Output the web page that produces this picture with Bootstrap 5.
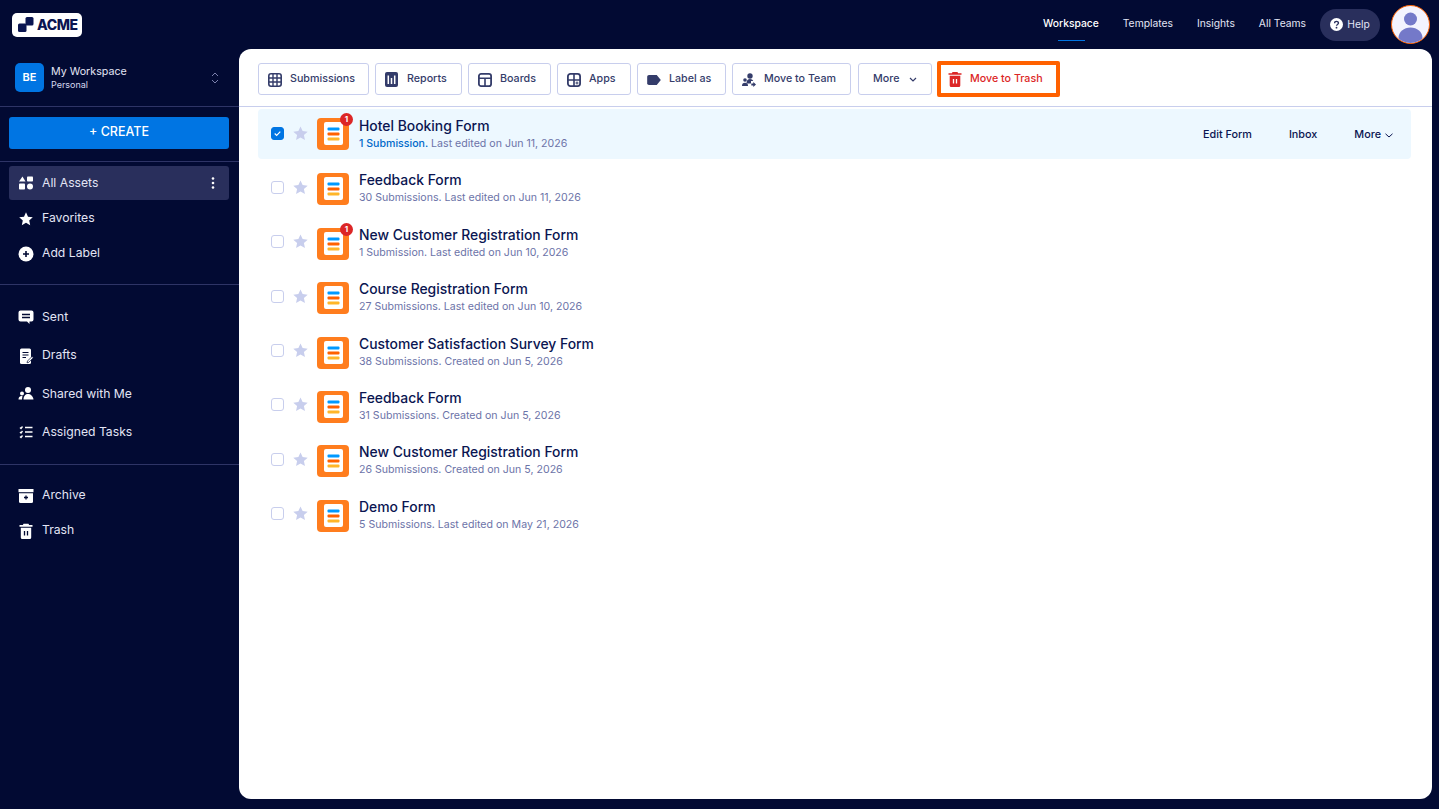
<!DOCTYPE html>
<html lang="en">
<head>
<meta charset="utf-8">
<title>Workspace</title>
<link href="https://cdn.jsdelivr.net/npm/bootstrap@5.3.0/dist/css/bootstrap.min.css" rel="stylesheet">
<style>
html,body{height:100%}
body{background:#020a33;font-family:"Inter","Liberation Sans",sans-serif;overflow:hidden;color:#0a1551}
.shell{height:809px}
.topbar{height:49px;padding:0 9px 0 12px}
.logo-box{width:70px;height:24px;background:#fff;border-radius:5px;gap:2px;padding-left:6px}
.logo-txt{font:800 14px/1 "Inter",sans-serif;color:#0a1551;letter-spacing:-.4px}
.topnav-link{position:relative;font-size:10.3px;color:#e3e5f5;text-decoration:none;margin-right:24px;margin-top:-1px}
.topnav-link.on{color:#fff;font-weight:500}
.topnav-link.on::after{content:"";position:absolute;left:15px;width:27px;bottom:-9px;height:1px;background:#0075e3}
.help-pill{width:60px;height:32px;border-radius:16px;background:#292f5c;font-size:10.3px;color:#e3e5f5;gap:4px;margin-left:14px}
.avatar-ring{width:39px;height:39px;border-radius:50%;border:1px solid #ff6100;background:#f3f3fe;margin-left:11px;overflow:hidden}
.bodyrow{height:750px}
.sidebar{width:239px;flex:none}
.ws-block{height:58px;padding:0 19px 0 15px;border-bottom:1px solid #2e3466}
.ws-badge{width:29px;height:29px;border-radius:5px;background:#0075e3;color:#fff;font-size:11px;font-weight:600;margin-right:7px}
.ws-name{font-size:10.7px;line-height:14px;padding-top:1px;color:#e3e5f5}
.ws-sub{font-size:9px;line-height:12px;color:#d5d8ee}
.create-wrap{padding:10px 10px 12px 9px;border-bottom:1px solid #2e3466}
.create-btn{height:32px;background:#0075e3;border:0;border-radius:3px;color:#fff;font-size:12.5px;font-weight:500;line-height:28px;padding:0 0 2px}
.side-group{padding:4px 10px 0 9px;border-bottom:1px solid #2e3466}
.side-item{height:35px;padding:2px 14px 0 9px;color:#e3e5f5;font-size:12.2px;text-decoration:none;border-radius:3px;gap:8px}
.side-item.on{background:#292f5c;height:34px;padding-top:0}
.side-item svg.gl{width:16px;height:16px;flex:none}
.g1{height:123px}
.g2{height:180px;padding-top:12px}
.g2 .side-item{height:38.4px}
.g3{padding-top:12px;border-bottom:0}
.panel{width:1193px;height:750px;background:#fff;border-radius:12px;flex:none}
.tools{height:58px;padding:14px 19px 0;gap:6px;border-bottom:1px solid #c8ceed}
.tool-btn{height:32px;border:1px solid #c8ceed;border-radius:3px;background:#fff;color:#343c6a;font-size:10.7px;font-weight:500;gap:8px;padding:1px 0 0 9px;flex:none}
.tool-btn svg.ti{flex:none;width:14px}
.w1{width:111px}.w2{width:87px}.w3{width:83px}.w4{width:74px}.w5{width:89px}.w6{width:119px}.w7{width:74px;margin-left:1px;padding-left:14px}
.chev-gap{margin-right:2px}
.trash-btn{width:123px;height:36px;margin:-2px 0 0 -1px;border:4px solid #ff6100;border-radius:2px;color:#dc2626;background:#fff;font-size:10.7px;font-weight:500;gap:8px;padding:1px 0 0 7px;flex:none}
.rows{padding:2px 21px 0 19px}
.form-row{height:54.4px;border-radius:4px;padding:0 18px 0 13px}
.form-row.sel{height:50px;background:#edf8ff;margin-bottom:3.2px}
.form-row .txt{margin-top:-2px}
.form-row.sel .txt{margin-top:0}
.cb-box{width:13px;height:13px;border:1px solid #c8ceed;border-radius:3px;background:#fff;flex:none;margin:0 8px 4px 0}
.cb-box.chk{background:#0075e3;border-color:#0075e3;margin-bottom:2px}
.star{width:17px;height:17px;flex:none;margin:0 8px 4px 0}
.sel .star{margin-bottom:2px}
.form-ic{position:relative;width:32px;height:32px;flex:none;background:#ff7d1e;border-radius:4px;margin-right:10px}
.red-dot{position:absolute;top:-5px;right:-4px;width:13px;height:13px;border-radius:50%;background:#dc2626;color:#fff;font-size:8px;font-weight:700;line-height:13px;text-align:center}
.f-title{font-size:13.9px;line-height:18px;font-weight:500;color:#0a1551}
.f-sub{font-size:10.6px;line-height:15px;padding-top:1px;color:#6c73a8}
.f-sub b{font-weight:500;color:#0068c9}
.act{font-size:10.8px;font-weight:500;color:#0a1551;text-decoration:none}
.acts{margin-top:3px}
.gap-a{margin-right:37px}
</style>
</head>
<body>
<svg width="0" height="0" class="position-absolute">
<defs>
<symbol id="formic" viewBox="0 0 32 32"><rect x="7" y="4" width="19" height="23" rx="2" fill="#fff"/><rect x="10.5" y="9.5" width="12" height="3" rx="1" fill="#09f"/><rect x="10.5" y="14.5" width="12" height="3" rx="1" fill="#ff6100"/><rect x="10.5" y="19.5" width="12" height="3" rx="1" fill="#ffb629"/></symbol>
<symbol id="st" viewBox="0 0 24 24"><path stroke-linejoin="round" d="M12 2l3 6.6 7.2.8-5.4 4.8 1.5 7.1L12 17.6l-6.3 3.700 1.500-7.100L1.800 9.400 9 8.600z"/></symbol>
</defs>
</svg>
<div class="shell d-flex flex-column">
  <header class="topbar d-flex align-items-center justify-content-between flex-none">
    <div class="logo-box d-flex align-items-center">
      <svg width="17" height="15" viewBox="0 0 17 15" fill="#0a1551"><rect x="7.500" y="0" width="8" height="8.500" rx="1.500"/><rect x="0" y="6.500" width="8.500" height="8.500" rx="1.500"/></svg>
      <span class="logo-txt">ACME</span>
    </div>
    <nav class="d-flex align-items-center">
      <a class="topnav-link on" href="#">Workspace</a>
      <a class="topnav-link" href="#">Templates</a>
      <a class="topnav-link" href="#">Insights</a>
      <a class="topnav-link me-0" href="#">All Teams</a>
      <div class="help-pill d-flex align-items-center justify-content-center">
        <svg width="13" height="13" viewBox="0 0 13 13"><circle cx="6.500" cy="6.500" r="6.500" fill="#fff"/><path d="M4.600 5.200c0-2.300 3.900-2.300 3.900-.1 0 1.300-2 1.400-2 2.700" fill="none" stroke="#292f5c" stroke-width="1.300"/><circle cx="6.500" cy="9.700" r=".9" fill="#292f5c"/></svg>
        <span>Help</span>
      </div>
      <div class="avatar-ring">
        <svg width="37" height="37" viewBox="0 0 37 37"><circle cx="18.500" cy="13" r="6.500" fill="#7479c9"/><ellipse cx="18.500" cy="32" rx="12" ry="10.500" fill="#7479c9"/></svg>
      </div>
    </nav>
  </header>
  <div class="bodyrow d-flex">
    <aside class="sidebar">
      <div class="ws-block d-flex align-items-center">
        <div class="ws-badge d-flex align-items-center justify-content-center">BE</div>
        <div class="flex-grow-1">
          <div class="ws-name">My Workspace</div>
          <div class="ws-sub">Personal</div>
        </div>
        <svg width="10" height="12" viewBox="0 0 10 12" fill="none" stroke="#7b80ad" stroke-width="1"><path d="M2 4l3-3 3 3M2 8l3 3 3-3"/></svg>
      </div>
      <div class="create-wrap"><button class="create-btn btn w-100">+ CREATE</button></div>
      <div class="side-group g1">
        <a class="side-item on d-flex align-items-center" href="#">
          <svg class="gl" viewBox="0 0 16 16" fill="#fff"><path d="M4.500 1.500l3 5H1z"/><rect x="9" y="1.500" width="6" height="5" rx=".8"/><rect x="1" y="8.500" width="6" height="6" rx=".8"/><circle cx="12" cy="11.500" r="3"/></svg>
          <span class="flex-grow-1">All Assets</span>
          <svg width="4" height="12" viewBox="0 0 4 12" fill="#fff"><circle cx="2" cy="1.500" r="1.300"/><circle cx="2" cy="6" r="1.300"/><circle cx="2" cy="10.500" r="1.300"/></svg>
        </a>
        <a class="side-item d-flex align-items-center" href="#">
          <svg class="gl" fill="#fff"><use href="#st"/></svg><span>Favorites</span>
        </a>
        <a class="side-item d-flex align-items-center" href="#">
          <svg class="gl" viewBox="0 0 16 16"><circle cx="8" cy="8" r="7.500" fill="#fff"/><path d="M8 5v6M5 8h6" stroke="#020a33" stroke-width="1.600"/></svg><span>Add Label</span>
        </a>
      </div>
      <div class="side-group g2">
        <a class="side-item d-flex align-items-center" href="#">
          <svg class="gl" viewBox="0 0 16 16"><path fill="#fff" d="M2.500 1.500h11A2 2 0 0 1 15.500 3.500v7a2 2 0 0 1-2 2H11.500v2.500l-2.500-2.500H2.500a2 2 0 0 1-2-2v-7a2 2 0 0 1 2-2z"/><path d="M4 5.500h8M4 8.500h8" stroke="#020a33" stroke-width="1.400"/></svg><span>Sent</span>
        </a>
        <a class="side-item d-flex align-items-center" href="#">
          <svg class="gl" viewBox="0 0 16 16"><path fill="#fff" d="M3.500.5h8a1.500 1.500 0 0 1 1.500 1.500v12.500a1.500 1.500 0 0 1-1.500 1.500h-8A1.500 1.500 0 0 1 2 14.500V2A1.500 1.500 0 0 1 3.500.5z"/><path d="M4.500 4.500h6M4.500 7h6M4.500 9.500h3.500" stroke="#020a33" stroke-width="1.100"/><path d="M9.500 13l4.500-4.500 1.300 1.300L10.800 14.300 9 14.800z" fill="#fff" stroke="#020a33" stroke-width=".7"/></svg><span>Drafts</span>
        </a>
        <a class="side-item d-flex align-items-center" href="#">
          <svg class="gl" viewBox="0 0 16 16" fill="#fff"><circle cx="10" cy="4" r="3"/><path d="M5.500 13.500c0-3.500 2-5.500 4.500-5.500s5 2 5.500 5.500z"/><circle cx="4" cy="7.500" r="2"/><path d="M.5 13.500c0-2 1.200-3.500 3-3.500.6 0 1 .2 1 .4-.4 1-.5 2-.5 3.100z"/></svg><span>Shared with Me</span>
        </a>
        <a class="side-item d-flex align-items-center" href="#">
          <svg class="gl" viewBox="0 0 16 16" fill="none" stroke="#fff" stroke-width="1.300"><path d="M7 3.500h7.500M7 8h7.500M7 12.500h7.500M2 3.500l1 1 1.500-2M2 8l1 1 1.500-2M2 12.500l1 1 1.500-2"/></svg><span>Assigned Tasks</span>
        </a>
      </div>
      <div class="side-group g3">
        <a class="side-item d-flex align-items-center" href="#">
          <svg class="gl" viewBox="0 0 16 16"><rect x=".5" y="1" width="15" height="3.200" fill="#fff"/><path fill="#fff" d="M1 5.200h14v8.300a1.500 1.500 0 0 1-1.500 1.500h-11A1.500 1.500 0 0 1 1 13.500z"/><path d="M8 7.500v4M6 9.500h4" stroke="#020a33" stroke-width="1.300"/></svg><span>Archive</span>
        </a>
        <a class="side-item d-flex align-items-center" href="#">
          <svg class="gl" viewBox="0 0 16 16"><path fill="#fff" d="M5.500.8h5l.6 1.200H14.500v1.800H1.500V2h3.400zM2.800 4.800h10.400v9.700a1.500 1.500 0 0 1-1.500 1.500H4.300a1.500 1.500 0 0 1-1.500-1.500z"/><path d="M6.500 8v4.500M9.500 8v4.500" stroke="#020a33" stroke-width="1.300"/></svg><span>Trash</span>
        </a>
      </div>
    </aside>
    <main class="panel">
      <div class="tools d-flex">
        <button class="tool-btn w1 d-flex align-items-center"><svg class="ti" height="14" viewBox="0 0 14 14"><rect x=".8" y=".8" width="12.400" height="12.400" rx="2.200" fill="none" stroke="#343c6a" stroke-width="1.600"/><path d="M5 1v12M9 1v12M1 5h12M1 9h12" stroke="#343c6a" stroke-width="1.400"/></svg><span>Submissions</span></button>
        <button class="tool-btn w2 d-flex align-items-center"><svg class="ti" height="15" viewBox="0 0 14 15"><rect width="13" height="15" rx="2" fill="#343c6a"/><path d="M3.300 3.500v8.500M6.500 6v6M9.700 3.500v8.500" stroke="#fff" stroke-width="1.500"/></svg><span>Reports</span></button>
        <button class="tool-btn w3 d-flex align-items-center"><svg class="ti" height="14" viewBox="0 0 14 14"><rect x=".9" y=".9" width="12.200" height="12.200" rx="2.200" fill="none" stroke="#343c6a" stroke-width="1.800"/><path d="M1 5.200h12M7 5.200V13" stroke="#343c6a" stroke-width="1.600"/></svg><span>Boards</span></button>
        <button class="tool-btn w4 d-flex align-items-center"><svg class="ti" height="14" viewBox="0 0 14 14"><rect x=".9" y=".9" width="12.200" height="12.200" rx="2.500" fill="none" stroke="#343c6a" stroke-width="1.800"/><path d="M7 1v12M1 7h12" stroke="#343c6a" stroke-width="1.600"/><path d="M10 8.500v3M8.500 10h3" stroke="#343c6a" stroke-width="1"/></svg><span>Apps</span></button>
        <button class="tool-btn w5 d-flex align-items-center"><svg class="ti" height="10" viewBox="0 0 15 11"><path d="M2 0h8.500L15 5.500 10.500 11H2a2 2 0 0 1-2-2V2a2 2 0 0 1 2-2z" fill="#343c6a"/></svg><span>Label as</span></button>
        <button class="tool-btn w6 d-flex align-items-center"><svg class="ti" height="14" viewBox="0 0 14 14" fill="#343c6a"><circle cx="8" cy="3" r="2.700"/><path d="M4.500 10c0-2.500 1.500-4 3.500-4 1.500 0 2.700.7 3.300 2H9v2.500H5z"/><circle cx="3" cy="7" r="1.800"/><path d="M0 13c0-2 1-3.200 3-3.200s3 1.200 3 3.200zM9.300 10.500h2V9l2.700 2.500L11.300 14v-1.500h-2z"/></svg><span>Move to Team</span></button>
        <button class="tool-btn w7 d-flex align-items-center"><span class="chev-gap">More</span><svg width="8" height="5" viewBox="0 0 8 5" fill="none" stroke="#343c6a" stroke-width="1.200"><path d="M1 1l3 3 3-3"/></svg></button>
        <button class="trash-btn d-flex align-items-center"><svg width="14" height="15" viewBox="0 0 13 15"><path fill="#dc2626" d="M4 0h5l.6 1.200H13v1.500H0V1.200h3.400zM1.200 3.800h10.600v9.700a1.500 1.500 0 0 1-1.500 1.500H2.700a1.500 1.500 0 0 1-1.500-1.500z"/><path d="M5 7v4.500M8 7v4.500" stroke="#fff" stroke-width="1.300"/></svg><span>Move to Trash</span></button>
      </div>
      <div class="rows">
        <div class="form-row sel d-flex align-items-center">
          <svg class="cb-box chk" viewBox="0 0 13 13"><path d="M3.200 6.500l2.300 2.300 4.300-4.500" fill="none" stroke="#fff" stroke-width="1.400"/></svg>
          <svg class="star" fill="#c8ceed"><use href="#st"/></svg>
          <div class="form-ic"><svg width="32" height="32"><use href="#formic"/></svg><span class="red-dot">1</span></div>
          <div class="txt flex-grow-1"><div class="f-title">Hotel Booking Form</div><div class="f-sub"><b>1 Submission.</b> Last edited on Jun 11, 2026</div></div>
          <div class="acts d-flex align-items-center">
            <a class="act gap-a" href="#">Edit Form</a><a class="act gap-a" href="#">Inbox</a><a class="act d-flex align-items-center gap-1" href="#">More <svg width="8" height="5" viewBox="0 0 8 5" fill="none" stroke="#0a1551" stroke-width="1"><path d="M.5.800L4 4 7.500.8"/></svg></a>
          </div>
        </div>
        <div class="form-row d-flex align-items-center"><span class="cb-box"></span><svg class="star" fill="#c8ceed"><use href="#st"/></svg><div class="form-ic"><svg width="32" height="32"><use href="#formic"/></svg></div><div class="txt"><div class="f-title">Feedback Form</div><div class="f-sub">30 Submissions. Last edited on Jun 11, 2026</div></div></div>
        <div class="form-row d-flex align-items-center"><span class="cb-box"></span><svg class="star" fill="#c8ceed"><use href="#st"/></svg><div class="form-ic"><svg width="32" height="32"><use href="#formic"/></svg><span class="red-dot">1</span></div><div class="txt"><div class="f-title">New Customer Registration Form</div><div class="f-sub">1 Submission. Last edited on Jun 10, 2026</div></div></div>
        <div class="form-row d-flex align-items-center"><span class="cb-box"></span><svg class="star" fill="#c8ceed"><use href="#st"/></svg><div class="form-ic"><svg width="32" height="32"><use href="#formic"/></svg></div><div class="txt"><div class="f-title">Course Registration Form</div><div class="f-sub">27 Submissions. Last edited on Jun 10, 2026</div></div></div>
        <div class="form-row d-flex align-items-center"><span class="cb-box"></span><svg class="star" fill="#c8ceed"><use href="#st"/></svg><div class="form-ic"><svg width="32" height="32"><use href="#formic"/></svg></div><div class="txt"><div class="f-title">Customer Satisfaction Survey Form</div><div class="f-sub">38 Submissions. Created on Jun 5, 2026</div></div></div>
        <div class="form-row d-flex align-items-center"><span class="cb-box"></span><svg class="star" fill="#c8ceed"><use href="#st"/></svg><div class="form-ic"><svg width="32" height="32"><use href="#formic"/></svg></div><div class="txt"><div class="f-title">Feedback Form</div><div class="f-sub">31 Submissions. Created on Jun 5, 2026</div></div></div>
        <div class="form-row d-flex align-items-center"><span class="cb-box"></span><svg class="star" fill="#c8ceed"><use href="#st"/></svg><div class="form-ic"><svg width="32" height="32"><use href="#formic"/></svg></div><div class="txt"><div class="f-title">New Customer Registration Form</div><div class="f-sub">26 Submissions. Created on Jun 5, 2026</div></div></div>
        <div class="form-row d-flex align-items-center"><span class="cb-box"></span><svg class="star" fill="#c8ceed"><use href="#st"/></svg><div class="form-ic"><svg width="32" height="32"><use href="#formic"/></svg></div><div class="txt"><div class="f-title">Demo Form</div><div class="f-sub">5 Submissions. Last edited on May 21, 2026</div></div></div>
      </div>
    </main>
  </div>
</div>
<script src="https://cdn.jsdelivr.net/npm/bootstrap@5.3.0/dist/js/bootstrap.bundle.min.js"></script>
</body>
</html>
